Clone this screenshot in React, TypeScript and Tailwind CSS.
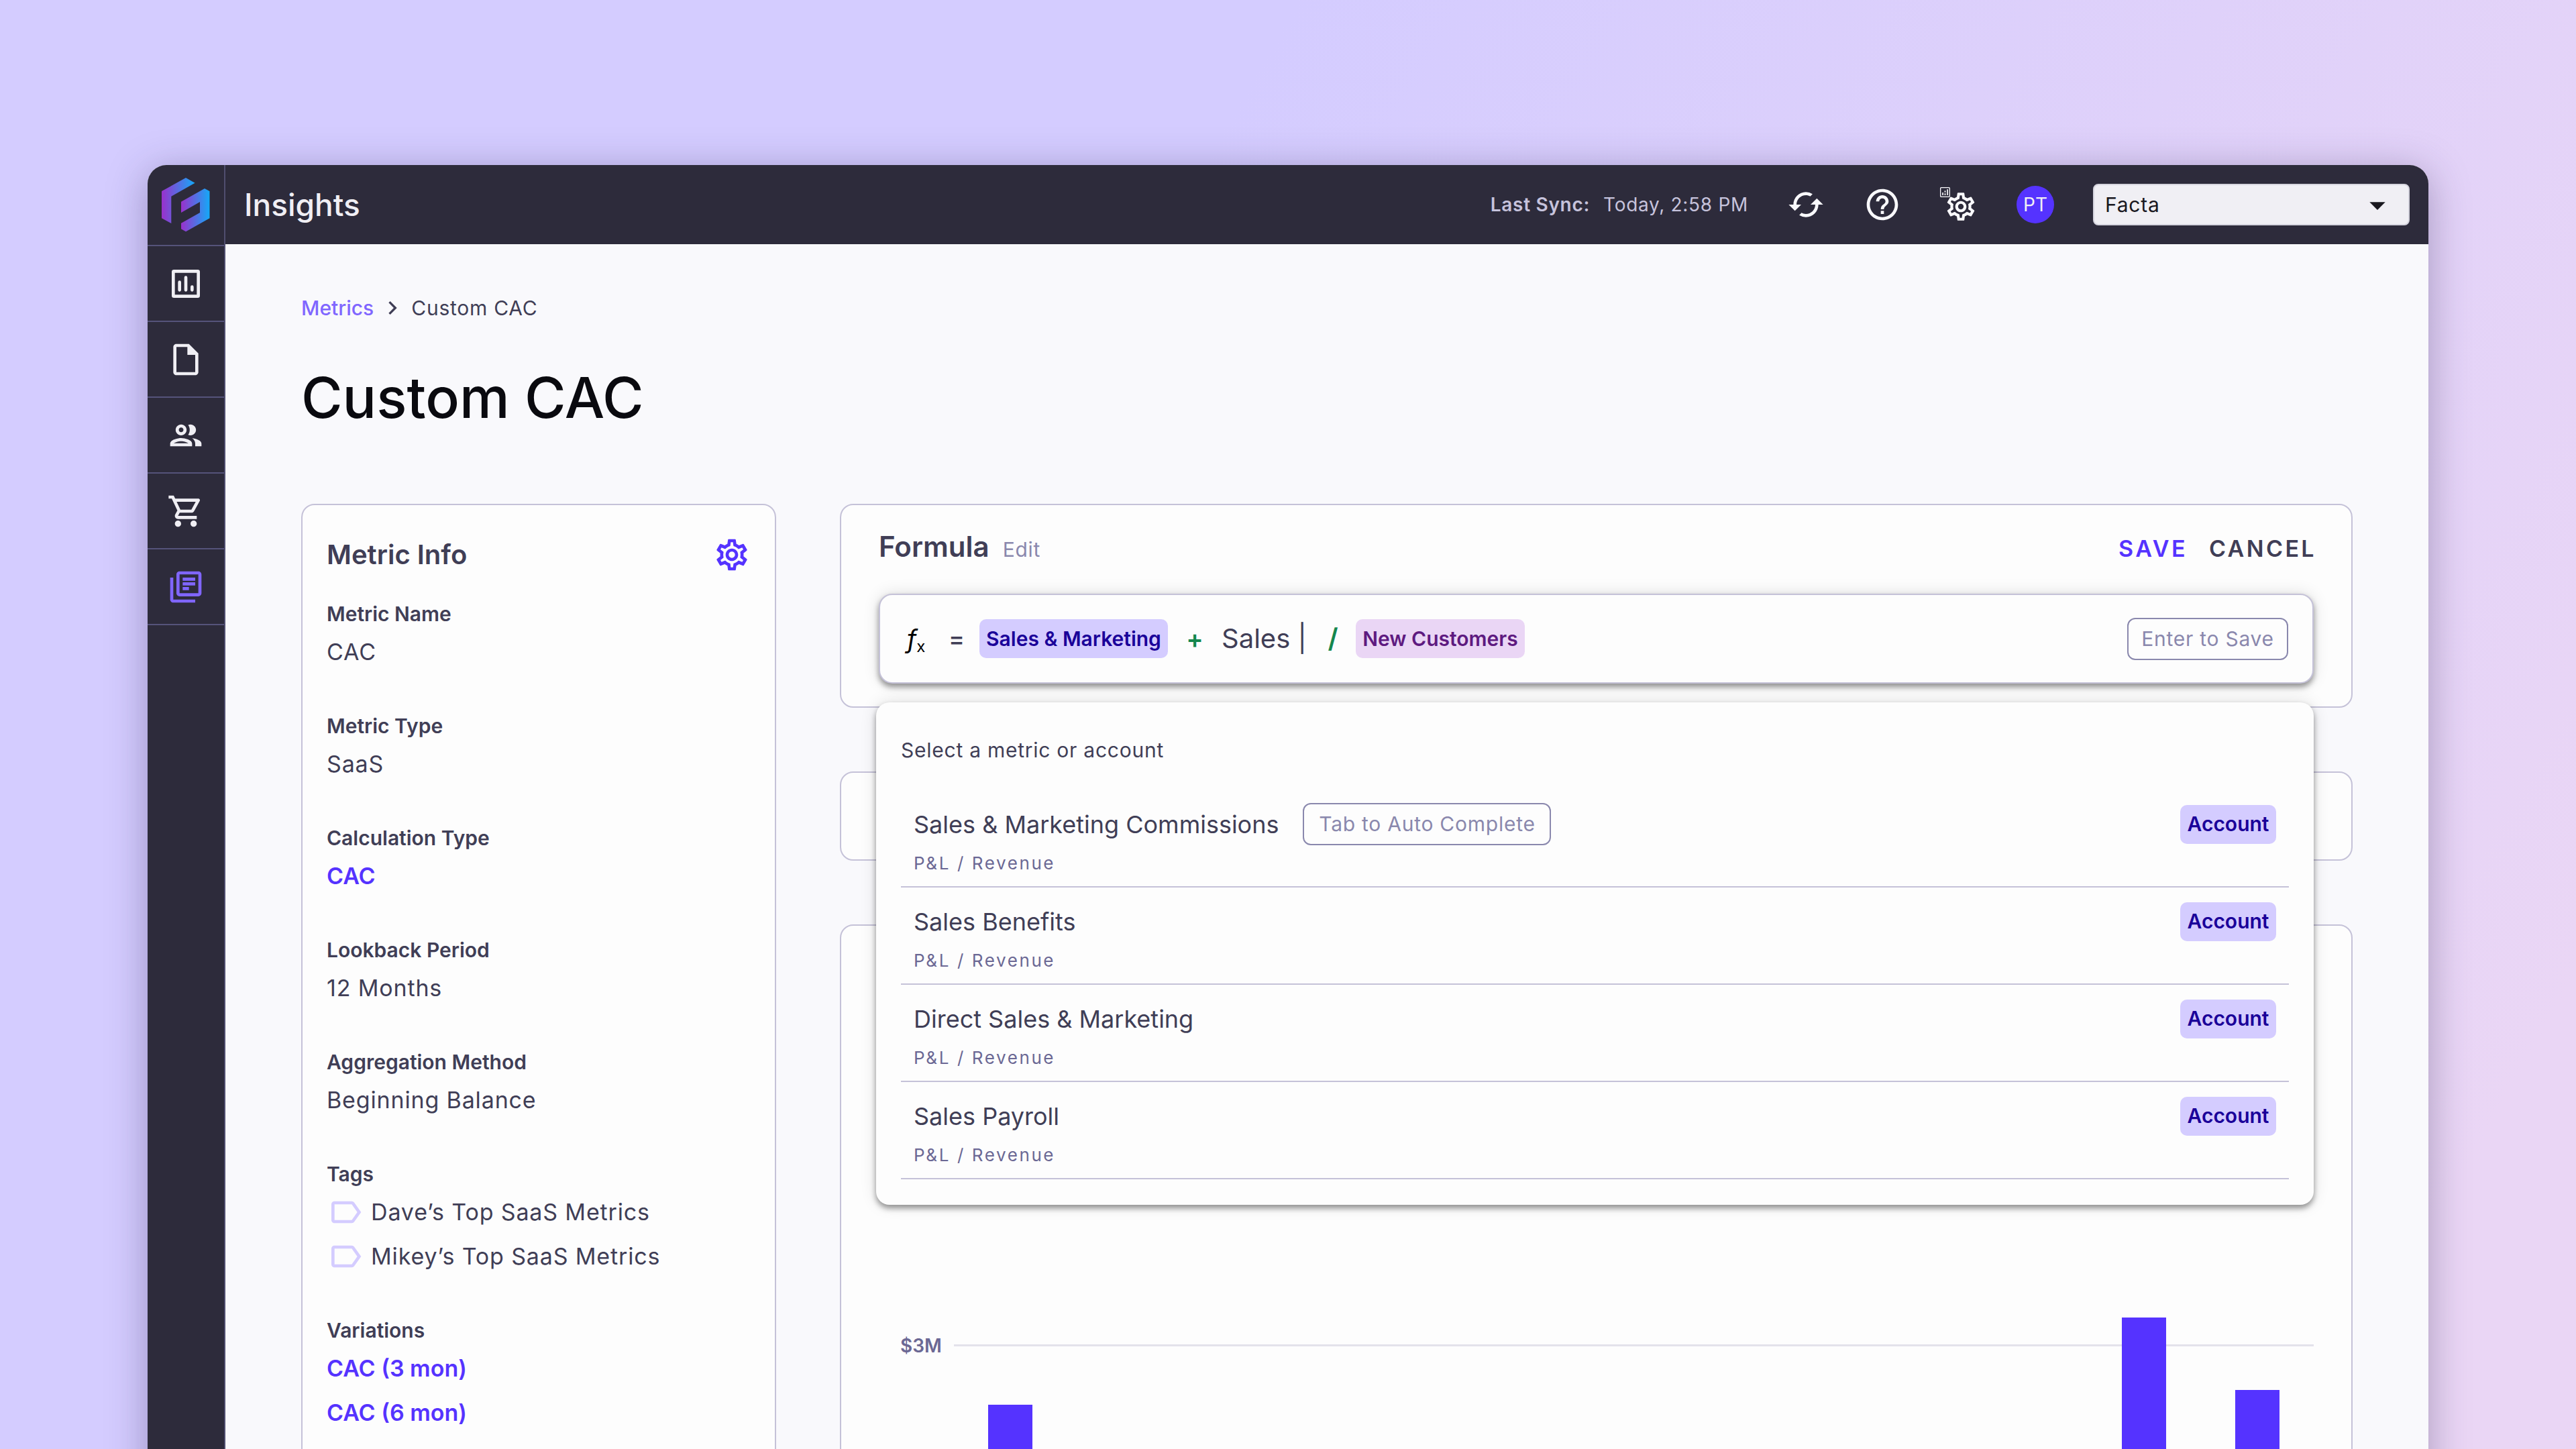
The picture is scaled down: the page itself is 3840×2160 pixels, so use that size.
import type { ReactNode } from "react";
import {
  MdArrowDropDown,
  MdCached,
  MdChevronRight,
  MdHelpOutline,
  MdLabelOutline,
  MdOutlineGroup,
  MdOutlineInsertDriveFile,
  MdOutlineLibraryBooks,
  MdOutlineSettings,
  MdOutlineShoppingCart,
} from "react-icons/md";

const ACCOUNTS = [
  { name: "Sales & Marketing Commissions", path: "P&L / Revenue" },
  { name: "Sales Benefits", path: "P&L / Revenue" },
  { name: "Direct Sales & Marketing", path: "P&L / Revenue" },
  { name: "Sales Payroll", path: "P&L / Revenue" },
];

// Monthly values in millions
const MONTHS = [2.56, 1.7, 1.9, 1.4, 1.6, 2.0, 1.8, 1.5, 1.9, 2.1, 3.21, 2.67];
const PX_PER_MILLION = 200;

function Logo() {
  return (
    <svg viewBox="0 0 72 81" className="w-[72px] h-[81px]" aria-label="Facta">
      <defs>
        <linearGradient id="logo-a" x1="0" x2="1" y1="0" y2="0">
          <stop offset="0" stopColor="#9a30cc" />
          <stop offset="1" stopColor="#14a9f8" />
        </linearGradient>
      </defs>
      <path
        d="M0 20 36 0 49.6 7.7 14.3 27.7V68L0 60.3Z"
        fill="url(#logo-a)"
      />
      <path
        d="M64 16 71.5 20V60.3L36 80.3 29 76.3V67.7L57 52V36L29 52V35.7Z"
        fill="url(#logo-a)"
      />
    </svg>
  );
}

function ChartBoxIcon({ className }: { className?: string }) {
  return (
    <svg viewBox="0 0 24 24" className={className} fill="none" stroke="currentColor" strokeWidth="2">
      <rect x="4" y="4" width="16" height="16" rx="0.4" />
      <path d="M8 11v5M12 8v8M16 14v2" strokeLinecap="round" />
    </svg>
  );
}

function MiniChartIcon({ className }: { className?: string }) {
  return (
    <svg viewBox="0 0 14 14" className={className} fill="none" stroke="currentColor">
      <rect x="0.6" y="0.6" width="12.8" height="12.8" rx="1" strokeWidth="1.2" />
      <path d="M3.8 11.2V7.5M7 11.2V8.6M7 7.2V5M10.4 11.2V3" strokeWidth="1.6" />
    </svg>
  );
}

const NAV = [
  { label: "Insights", Icon: ChartBoxIcon },
  { label: "Documents", Icon: MdOutlineInsertDriveFile },
  { label: "People", Icon: MdOutlineGroup },
  { label: "Orders", Icon: MdOutlineShoppingCart },
  { label: "Metrics", Icon: MdOutlineLibraryBooks, active: true },
];

function Sidebar() {
  return (
    <aside className="w-[116px] shrink-0 border-r-2 border-[#504e6f] bg-[#2d2b3b]">
      <div className="h-[121px] border-b-2 border-[#55537a] flex items-center justify-center">
        <Logo />
      </div>
      <nav>
        {NAV.map(({ label, Icon, active }) => (
          <a
            key={label}
            href="#"
            aria-label={label}
            className={`h-[113px] border-b-2 border-[#55537a] flex items-center justify-center ${
              active ? "text-[#8066ff]" : "text-[#f0eff4]"
            }`}
          >
            <Icon className="w-14 h-14" />
          </a>
        ))}
      </nav>
    </aside>
  );
}

function Header() {
  return (
    <header className="h-[118px] bg-[#2d2b3b] px-7 flex items-center justify-between">
      <div className="text-[46px] font-medium text-[#f0eff4]">Insights</div>
      <div className="flex items-center gap-[58px] text-[#f9f9fc]">
        <div className="flex gap-5 text-[28px] tracking-wide text-[#c6c3dc]">
          <span className="font-semibold">Last Sync:</span>
          <span>Today, 2:58 PM</span>
        </div>
        <button aria-label="Sync now">
          <MdCached className="w-14 h-14" />
        </button>
        <button aria-label="Help">
          <MdHelpOutline className="w-14 h-14" />
        </button>
        <button aria-label="Settings" className="relative w-14 h-14 flex items-end justify-end">
          <MdOutlineSettings className="w-[50px] h-[50px]" />
          <MiniChartIcon className="absolute top-0.5 left-0 w-[15px] h-[15px]" />
        </button>
        <button className="w-14 h-14 rounded-full bg-[#5533ff] text-[28px] text-[#f0eff4]">
          PT
        </button>
        <div className="relative">
          <select
            aria-label="Company"
            className="appearance-none w-[472px] h-[62px] rounded-lg border-2 border-[#d5d4de] bg-[#f0eff4] pl-4 text-[30px] tracking-wide text-[#19181f]"
          >
            <option>Facta</option>
          </select>
          <MdArrowDropDown className="absolute right-5 top-1 w-14 h-14 text-[#19181f] pointer-events-none" />
        </div>
      </div>
    </header>
  );
}

function Field({ label, children }: { label: string; children: ReactNode }) {
  return (
    <div>
      <dt className="text-[30px] leading-10 font-semibold">{label}</dt>
      <dd className="mt-1 flex flex-col items-start text-[34px] leading-[66px] tracking-wide">
        {children}
      </dd>
    </div>
  );
}

function FieldLink({ children }: { children: ReactNode }) {
  return (
    <a href="#" className="font-semibold tracking-normal text-[#5533ff]">
      {children}
    </a>
  );
}

function Tag({ children }: { children: ReactNode }) {
  return (
    <span className="flex items-center gap-2.5">
      <MdLabelOutline className="w-14 h-14 text-[#d4ccff]" />
      {children}
    </span>
  );
}

function MetricInfo() {
  return (
    <section className="rounded-[20px] border-2 border-[#c5c2d8] bg-[#fdfdfd] px-9 pt-[46px] pb-16">
      <div className="flex items-center justify-between">
        <h2 className="text-[40px] leading-[56px] font-semibold">Metric Info</h2>
        <button aria-label="Metric settings">
          <MdOutlineSettings className="w-14 h-14 text-[#5533ff]" />
        </button>
      </div>
      <dl className="mt-10 flex flex-col gap-[57px]">
        <Field label="Metric Name">CAC</Field>
        <Field label="Metric Type">SaaS</Field>
        <Field label="Calculation Type">
          <FieldLink>CAC</FieldLink>
        </Field>
        <Field label="Lookback Period">12 Months</Field>
        <Field label="Aggregation Method">Beginning Balance</Field>
        <Field label="Tags">
          <Tag>Dave’s Top SaaS Metrics</Tag>
          <Tag>Mikey’s Top SaaS Metrics</Tag>
        </Field>
        <Field label="Variations">
          <FieldLink>CAC (3 mon)</FieldLink>
          <FieldLink>CAC (6 mon)</FieldLink>
        </Field>
      </dl>
    </section>
  );
}

function AccountMenu() {
  return (
    <div className="absolute z-10 top-full -left-1 right-0 mt-7 rounded-[20px] bg-[#fdfdfd] px-[37px] pt-[51px] pb-[38px] shadow-[0_5px_8px_rgba(0,0,0,0.4),0_0_24px_rgba(0,0,0,0.12)]">
      <p className="text-[30px] leading-10 tracking-wide">Select a metric or account</p>
      <ul className="mt-10">
        {ACCOUNTS.map((a, i) => (
          <li key={a.name} className="border-b-2 border-[#c5c2d8] px-[19px] py-[19px]">
            <div className="h-[63px] flex items-center">
              <span className="text-[36px]">{a.name}</span>
              {i === 0 && (
                <button className="ml-9 w-[370px] h-[63px] rounded-xl border-2 border-[#8a88ad] text-[30px] tracking-wide text-[#8a88ad]">
                  Tab to Auto Complete
                </button>
              )}
              <span className="ml-auto w-[143px] h-[58px] rounded-[10px] bg-[#d4ccff] flex items-center justify-center text-[30px] font-semibold text-[#1a0099]">
                Account
              </span>
            </div>
            <div className="mt-3 text-[26px] leading-[30px] tracking-widest text-[#6b6894]">
              {a.path}
            </div>
          </li>
        ))}
      </ul>
    </div>
  );
}

function Formula() {
  return (
    <section className="h-[304px] rounded-[20px] border-2 border-[#c5c2d8] bg-[#fdfdfd] px-14 pt-9">
      <div className="flex items-baseline justify-between leading-[52px]">
        <div className="flex items-baseline gap-5">
          <h2 className="text-[42px] font-semibold">Formula</h2>
          <span className="text-[30px] tracking-wide text-[#8a88ad]">Edit</span>
        </div>
        <div className="-mr-1 flex gap-8 text-[34px] font-semibold tracking-widest">
          <button className="text-[#5533ff]">SAVE</button>
          <button>CANCEL</button>
        </div>
      </div>

      <div className="relative mt-10">
        <div className="h-[134px] rounded-[20px] border-2 border-[#c5c2d8] bg-[#fdfdfd] pl-10 pr-9 flex items-center shadow-[0_5px_8px_rgba(0,0,0,0.4),0_0_24px_rgba(0,0,0,0.12)]">
          <span className="w-[62px] text-[38px] italic text-black">
            f<sub className="text-[24px] not-italic">x</sub>
          </span>
          <span className="w-[46px] text-[36px] font-medium">=</span>
          <span className="w-[281px] h-[58px] rounded-[10px] bg-[#d4ccff] flex items-center justify-center text-[30px] font-semibold text-[#1a0099]">
            Sales &amp; Marketing
          </span>
          <span className="w-20 text-center text-[38px] font-semibold text-[#15874d]">+</span>
          <input
            aria-label="Formula term"
            defaultValue="Sales |"
            className="w-[132px] bg-transparent text-[40px] outline-none"
          />
          <span className="w-[68px] text-center text-[40px] font-semibold text-[#15874d]">/</span>
          <span className="w-[252px] h-[58px] rounded-[10px] bg-[#ead6f5] flex items-center justify-center text-[30px] font-semibold text-[#5e1a80]">
            New Customers
          </span>
          <button className="ml-auto w-[240px] h-[63px] rounded-xl border-2 border-[#8a88ad] text-[30px] tracking-wide text-[#8a88ad]">
            Enter to Save
          </button>
        </div>
        <AccountMenu />
      </div>
    </section>
  );
}

function Chart() {
  return (
    <section className="rounded-[20px] border-2 border-[#c5c2d8] bg-[#fdfdfd] pl-[88px] pr-14 pt-[606px] pb-16">
      <div className="flex gap-5">
        <span className="w-[60px] text-[28px] leading-10 font-semibold text-[#6b6894]">$3M</span>
        <div className="flex-1 grid grid-rows-1 h-[620px]">
          <div className="col-start-1 row-start-1 mt-[18px] border-t-[3px] border-[#e3e2eb]" />
          <div className="relative col-start-1 row-start-1 grid grid-cols-12 grid-rows-1 items-end justify-items-center">
            {MONTHS.map((v, i) => (
              <div
                key={i}
                className="w-[66px] bg-[#5533ff]"
                style={{ height: `${v * PX_PER_MILLION}px` }}
              />
            ))}
          </div>
        </div>
      </div>
    </section>
  );
}

export default function App() {
  return (
    <div className="h-screen overflow-hidden px-[220px] pt-[246px] bg-[linear-gradient(120deg,#d4ccff_38%,#ead6f5_92%)] font-['Inter',sans-serif] text-[#403e56]">
      <div className="flex rounded-t-[28px] overflow-hidden bg-[#f9f9fc] shadow-[0_10px_60px_rgba(45,35,80,0.35)]">
        <Sidebar />
        <div className="flex-1 min-w-0">
          <Header />
          <main className="px-[113px] pt-[75px] pb-24">
            <nav className="flex items-center text-[30px] leading-10">
              <a href="#" className="font-medium text-[#8066ff]">
                Metrics
              </a>
              <MdChevronRight className="w-10 h-10 mx-2" />
              <span className="tracking-wide">Custom CAC</span>
            </nav>
            <h1 className="mt-[62px] text-[84px] leading-[104px] font-medium text-[#0a0a0f]">
              Custom CAC
            </h1>
            <div className="mt-[106px] grid grid-cols-[708px_1fr] items-start gap-[95px]">
              <MetricInfo />
              <div className="flex flex-col gap-[95px]">
                <Formula />
                <section className="h-[133px] rounded-[20px] border-2 border-[#c5c2d8] bg-[#fdfdfd]" />
                <Chart />
              </div>
            </div>
          </main>
        </div>
      </div>
    </div>
  );
}
